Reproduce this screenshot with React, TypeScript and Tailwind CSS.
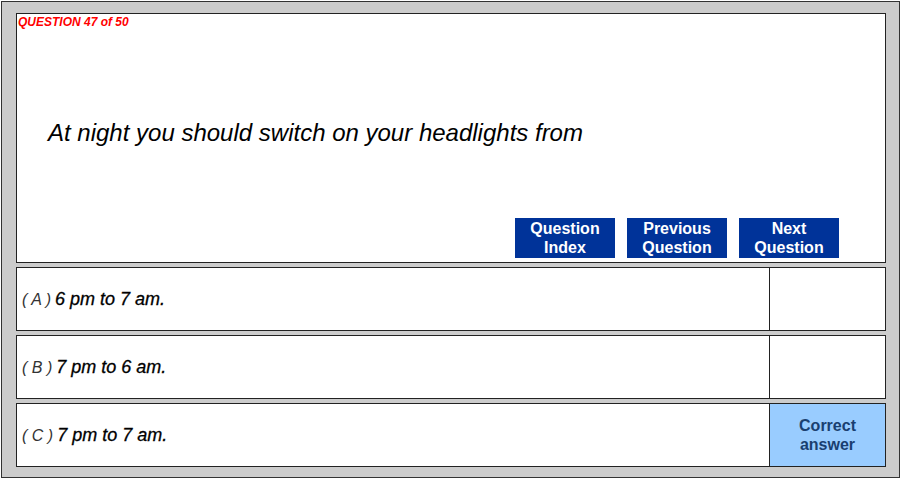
export default function App() {
  const answers = [
    { key: "A", text: "6 pm to 7 am.", correct: false },
    { key: "B", text: "7 pm to 6 am.", correct: false },
    { key: "C", text: "7 pm to 7 am.", correct: true },
  ];

  return (
    <div className="h-[479px] w-[902px] bg-white p-px font-['Liberation_Sans',Arial,sans-serif]">
      <div className="flex h-[477px] w-[899px] flex-col gap-1 border border-[#333333] bg-[#cccccc] pl-[14px] pt-[11px]">
        {/* question panel */}
        <div className="flex h-[250px] w-[870px] flex-col border border-[#222222] bg-white">
          <p className="pl-[1px] pt-[2px] text-[12px] leading-[13px] font-bold italic text-[#ff0000]">
            QUESTION 47 of 50
          </p>
          <p className="mt-[90px] pl-[31px] text-[24px] leading-[28px] italic text-black">
            At night you should switch on your headlights from
          </p>
          <div className="mt-auto mb-[4px] flex justify-end gap-3 pr-[46px]">
            {["Question Index", "Previous Question", "Next Question"].map((label) => {
              const [a, b] = label.split(" ");
              return (
                <button
                  key={label}
                  className="flex h-10 w-[100px] flex-col items-center justify-center bg-[#003399] text-[16px] leading-[19px] font-bold text-white"
                >
                  <span>{a}</span>
                  <span>{b}</span>
                </button>
              );
            })}
          </div>
        </div>

        {/* answers */}
        {answers.map((a) => (
          <div
            key={a.key}
            className="flex h-16 w-[870px] border border-[#222222] bg-white"
          >
            <div className="flex flex-1 items-center pl-[5px] pt-px italic text-black">
              <span className="text-[16px] text-[#333333]">( {a.key} )</span>
              <span className="ml-[4px] text-[18px] text-black [-webkit-text-stroke:0.3px_black]">{a.text}</span>
            </div>
            <div
              className={
                a.correct
                  ? "flex w-[116px] flex-col items-center justify-center border-l border-[#222222] bg-[#99ccff] text-[16px] leading-[19px] font-bold text-[#1a3f70]"
                  : "w-[116px] border-l border-[#222222]"
              }
            >
              {a.correct && (
                <>
                  <span>Correct</span>
                  <span>answer</span>
                </>
              )}
            </div>
          </div>
        ))}
      </div>
    </div>
  );
}
